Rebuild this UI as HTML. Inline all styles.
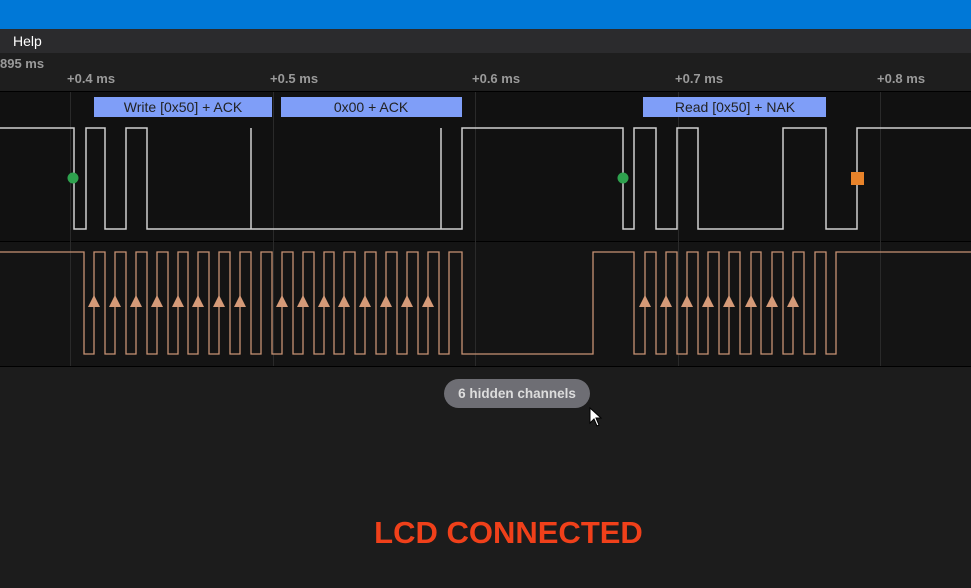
<!DOCTYPE html><html><head><style>
body{margin:0;width:971px;height:588px;overflow:hidden;background:#1c1c1c;font-family:"Liberation Sans",sans-serif;position:relative}
.t{position:absolute;left:0;top:0;width:971px;height:29px;background:#0078d7}
.m{position:absolute;left:0;top:29px;width:971px;height:24px;background:#2b2b2d;color:#fff;font-size:14px}
.m span{position:absolute;left:13px;top:4px}
.pill{position:absolute;left:444px;top:379px;width:146px;height:29px;border-radius:15px;background:#6e6e74;color:#ddd;font-size:13.5px;font-weight:bold;text-align:center;line-height:29px}
.lcd{position:absolute;left:0;width:1017px;top:515px;text-align:center;color:#f0401a;font-weight:bold;font-size:31px}
</style></head><body>
<div class="t"></div><div class="m"><span>Help</span></div>
<svg style="position:absolute;left:0;top:53px" width="971" height="314" viewBox="0 53 971 314">
<rect x="0" y="53" width="971" height="38" fill="#1e1e1e"/>
<rect x="0" y="92" width="971" height="149" fill="#111"/>
<rect x="0" y="242" width="971" height="124" fill="#141414"/>
<line x1="0" y1="91.5" x2="971" y2="91.5" stroke="#000"/>
<line x1="0" y1="241.5" x2="971" y2="241.5" stroke="#000"/>
<line x1="0" y1="366.5" x2="971" y2="366.5" stroke="#000"/>
<g stroke="#2a2a2a"><line x1="70.5" y1="92" x2="70.5" y2="366"/><line x1="273.5" y1="92" x2="273.5" y2="366"/><line x1="475.5" y1="92" x2="475.5" y2="366"/><line x1="678.5" y1="92" x2="678.5" y2="366"/><line x1="880.5" y1="92" x2="880.5" y2="366"/></g>
<g fill="#9a9a9a" font-size="13" font-weight="bold" font-family="Liberation Sans,sans-serif">
<text x="0" y="68">895 ms</text><text x="67" y="83">+0.4 ms</text><text x="270" y="83">+0.5 ms</text><text x="472" y="83">+0.6 ms</text><text x="675" y="83">+0.7 ms</text><text x="877" y="83">+0.8 ms</text></g>
<g fill="#7f9ef8"><rect x="94" y="97" width="178" height="20"/><rect x="281" y="97" width="181" height="20"/><rect x="643" y="97" width="183" height="20"/></g>
<g fill="#222" font-size="14" text-anchor="middle" font-family="Liberation Sans,sans-serif"><text x="183" y="112">Write [0x50] + ACK</text><text x="371" y="112">0x00 + ACK</text><text x="735" y="112">Read [0x50] + NAK</text></g>
<path fill="none" stroke="#d0d0d0" stroke-width="1.5" d="M0 128 H74 V229 H86 V128 H105 V229 H126 V128 H147 V229 H251 V128 V229 H441 V128 V229 H462 V128 H623 V229 H634 V128 H656 V229 H677 V128 H698 V229 H783 V128 H826 V229 H857 V128 H971"/>
<circle cx="73" cy="178" r="5.5" fill="#2ea24e"/><circle cx="623" cy="178" r="5.5" fill="#2ea24e"/>
<rect x="851" y="172" width="13" height="13" fill="#e8832a"/>
<path fill="none" stroke="#c89273" stroke-width="1.3" d="M0 252 H84 V354 H94 V252 H105 V354 H115 V252 H126 V354 H136 V252 H147 V354 H157 V252 H168 V354 H178 V252 H188 V354 H198 V252 H209 V354 H219 V252 H230 V354 H240 V252 H251 V354 H261 V252 H272 V354 H282 V252 H293 V354 H303 V252 H314 V354 H324 V252 H334 V354 H344 V252 H355 V354 H365 V252 H376 V354 H386 V252 H397 V354 H407 V252 H418 V354 H428 V252 H439 V354 H449 V252 H462 V354 H593 V252 H634 V354 H645 V252 H656 V354 H666 V252 H677 V354 H687 V252 H698 V354 H708 V252 H719 V354 H729 V252 H740 V354 H751 V252 H761 V354 H772 V252 H783 V354 H793 V252 H804 V354 H815 V252 H826 V354 H836 V252 H971"/>
<g fill="#d59a78">
<path d="M88 307L94 295L100 307Z"/><path d="M109 307L115 295L121 307Z"/><path d="M130 307L136 295L142 307Z"/><path d="M151 307L157 295L163 307Z"/><path d="M172 307L178 295L184 307Z"/><path d="M192 307L198 295L204 307Z"/><path d="M213 307L219 295L225 307Z"/><path d="M234 307L240 295L246 307Z"/>
<path d="M276 307L282 295L288 307Z"/><path d="M297 307L303 295L309 307Z"/><path d="M318 307L324 295L330 307Z"/><path d="M338 307L344 295L350 307Z"/><path d="M359 307L365 295L371 307Z"/><path d="M380 307L386 295L392 307Z"/><path d="M401 307L407 295L413 307Z"/><path d="M422 307L428 295L434 307Z"/>
<path d="M639 307L645 295L651 307Z"/><path d="M660 307L666 295L672 307Z"/><path d="M681 307L687 295L693 307Z"/><path d="M702 307L708 295L714 307Z"/><path d="M723 307L729 295L735 307Z"/><path d="M745 307L751 295L757 307Z"/><path d="M766 307L772 295L778 307Z"/><path d="M787 307L793 295L799 307Z"/>
</g></svg>
<div class="pill">6 hidden channels</div>
<svg style="position:absolute;left:589px;top:407px" width="14" height="20"><path d="M1 1V16L5 12L8 19L10 18L7 11H12Z" fill="#fff" stroke="#000" stroke-width="1"/></svg>
<div class="lcd">LCD CONNECTED</div>
</body></html>
